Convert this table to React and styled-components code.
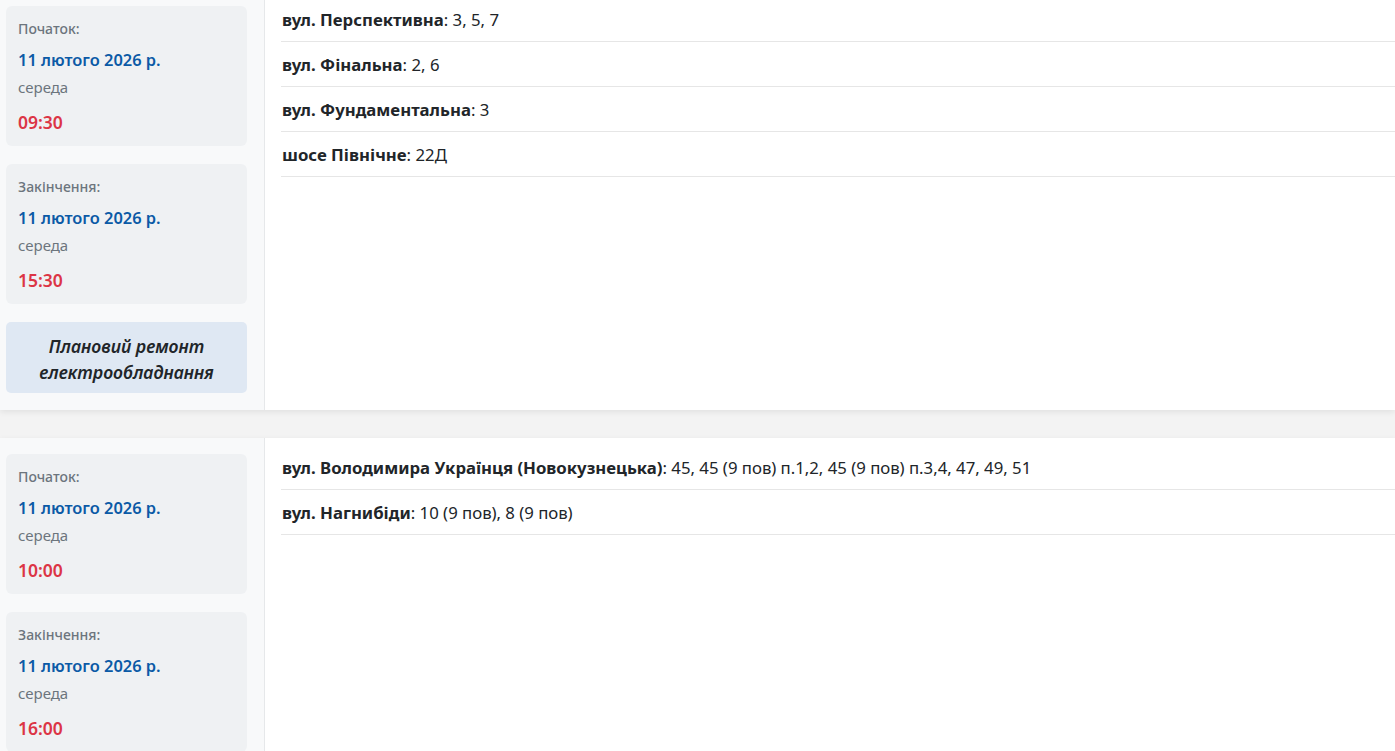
import React from "react";
import styled, { createGlobalStyle } from "styled-components";

const GlobalStyle = createGlobalStyle`
  html, body {
    margin: 0;
    padding: 0;
    background: #f3f3f3;
    font-family: "Noto Sans", "Open Sans", sans-serif;
    color: #212529;
    overflow: hidden;
  }
`;

const List = styled.div`
  margin-top: -10px;
  display: flex;
  flex-direction: column;
  gap: 28px;
`;

const Card = styled.div`
  display: flex;
  background: #ffffff;
  box-shadow: 0 2px 6px rgba(0, 0, 0, 0.08);
`;

const Side = styled.div`
  width: 241px;
  flex-shrink: 0;
  padding: 16px 17px 17px 6px;
  background: #f8f9fa;
  border-right: 1px solid #e6e8ea;
  display: flex;
  flex-direction: column;
  gap: 18px;
`;

const TimeBox = styled.div`
  background: #eff1f3;
  border-radius: 6px;
  padding: 12px 12px 11px;
  display: flex;
  flex-direction: column;
`;

const Label = styled.div`
  font-size: 14px;
  line-height: 21px;
  font-weight: 500;
  color: #6c757d;
`;

const DateText = styled.div`
  margin-top: 8px;
  font-size: 16.4px;
  line-height: 25px;
  font-weight: 600;
  color: #0b5aa6;
`;

const Weekday = styled.div`
  margin-top: 4px;
  font-size: 15px;
  line-height: 22px;
  color: #6c757d;
`;

const Clock = styled.div`
  margin-top: 12px;
  font-size: 17.5px;
  line-height: 25px;
  font-weight: 600;
  color: #dc3545;
`;

const Reason = styled.div`
  background: #dfe8f3;
  border-radius: 5px;
  padding: 11px 12px 8px;
  text-align: center;
  font-size: 17.6px;
  line-height: 26px;
  font-weight: 600;
  font-style: italic;
  color: #212529;
`;

const Streets = styled.div`
  flex: 1;
  padding: 7px 0 0 16px;
`;

const Row = styled.div`
  padding: 11px 0 10px 1px;
  font-size: 16.75px;
  line-height: 23px;
  border-bottom: 1px solid #e6e6e6;
  color: #212529;
`;

const Street = styled.b`
  font-weight: 700;
`;

const outages = [
  {
    start: { date: "11 лютого 2026 р.", day: "середа", time: "09:30" },
    end: { date: "11 лютого 2026 р.", day: "середа", time: "15:30" },
    reason: "Плановий ремонт електрообладнання",
    streets: [
      ["вул. Перспективна", "3, 5, 7"],
      ["вул. Фінальна", "2, 6"],
      ["вул. Фундаментальна", "3"],
      ["шосе Північне", "22Д"],
    ],
  },
  {
    start: { date: "11 лютого 2026 р.", day: "середа", time: "10:00" },
    end: { date: "11 лютого 2026 р.", day: "середа", time: "16:00" },
    reason: "Плановий ремонт електрообладнання",
    streets: [
      ["вул. Володимира Українця (Новокузнецька)", "45, 45 (9 пов) п.1,2, 45 (9 пов) п.3,4, 47, 49, 51"],
      ["вул. Нагнибіди", "10 (9 пов), 8 (9 пов)"],
    ],
  },
];

const Moment = ({ label, data }) => (
  <TimeBox>
    <Label>{label}</Label>
    <DateText>{data.date}</DateText>
    <Weekday>{data.day}</Weekday>
    <Clock>{data.time}</Clock>
  </TimeBox>
);

const App = () => (
  <>
    <GlobalStyle />
    <List>
      {outages.map((o, i) => (
        <Card key={i}>
          <Side>
            <Moment label="Початок:" data={o.start} />
            <Moment label="Закінчення:" data={o.end} />
            <Reason>{o.reason}</Reason>
          </Side>
          <Streets>
            {o.streets.map(([name, houses]) => (
              <Row key={name}>
                <Street>{name}</Street>: {houses}
              </Row>
            ))}
          </Streets>
        </Card>
      ))}
    </List>
  </>
);

export default App;
